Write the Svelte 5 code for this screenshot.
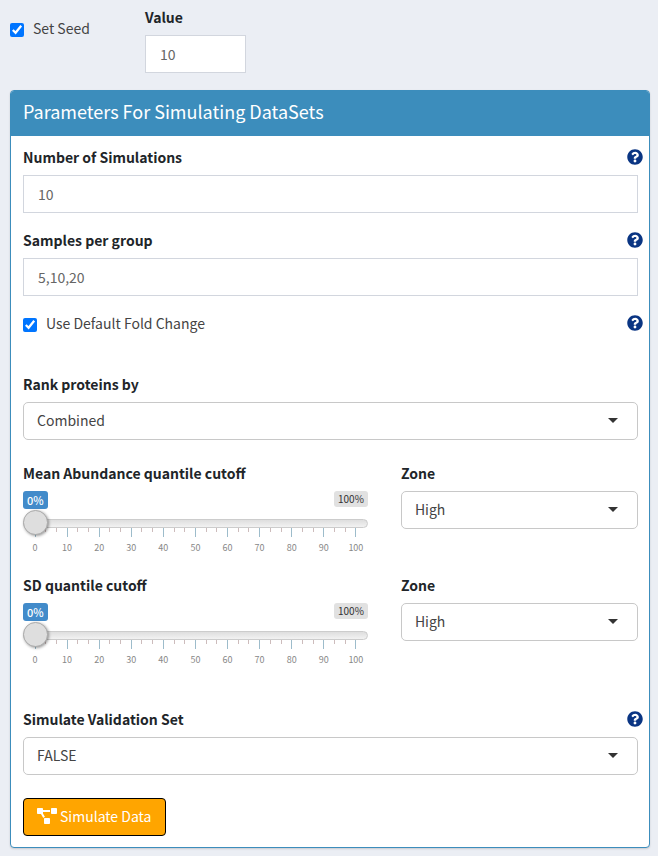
<script>
  let useSeed = $state(true);
  let seed = $state('10');
  let simulations = $state('10');
  let samples = $state('5,10,20');
  let defaultFold = $state(true);
  let rank = $state('Combined');
  let validation = $state('FALSE');
  let cutoffs = $state([
    { id: 'mean', label: 'Mean Abundance quantile cutoff', value: 0, zone: 'High' },
    { id: 'sd', label: 'SD quantile cutoff', value: 0, zone: 'High' }
  ]);

  // Eleven labelled ticks with two short ones between each pair.
  const ticks = Array.from({ length: 31 }, (_, i) => ({
    x: `${(i / 30) * 100}%`,
    major: i % 3 === 0,
    text: (i / 3) * 10
  }));
</script>

{#snippet help(topic)}
  <button type="button" class="help" aria-label={`Help: ${topic}`}>
    <svg viewBox="0 0 512 512" aria-hidden="true">
      <path d="M504 256c0 137-111 248-248 248S8 393 8 256C8 119.100 119 8 256 8s248 111.100 248 248zM262.700 90c-54.500 0-89.300 23-116.500 63.800-3.500 5.300-2.400 12.400 2.700 16.300l34.700 26.300c5.200 3.900 12.600 3 16.700-2.100 17.900-22.700 30.100-35.800 57.300-35.800 20.400 0 45.700 13.100 45.700 33 0 15-12.400 22.700-32.500 34C247.100 238.500 216 254.900 216 296v4c0 6.600 5.400 12 12 12h56c6.600 0 12-5.400 12-12v-1.300c0-28.500 83.200-29.600 83.200-106.700 0-58-60.200-102-116.500-102zM256 338c-25.400 0-46 20.600-46 46s20.600 46 46 46 46-20.600 46-46-20.600-46-46-46z" />
    </svg>
  </button>
{/snippet}

<main>
  <div class="seed">
    <label class="check seed-check">
      <input type="checkbox" bind:checked={useSeed} />
      <span>Set Seed</span>
    </label>
    <div class="seed-value">
      <div class="head"><label for="seed">Value</label></div>
      <input id="seed" class="control" type="text" bind:value={seed} />
    </div>
  </div>

  <section class="card">
    <h1>Parameters For Simulating DataSets</h1>
    <form class="body" onsubmit={(e) => e.preventDefault()}>
      <div class="field">
        <div class="head">
          <label for="sims">Number of Simulations</label>
          {@render help('Number of Simulations')}
        </div>
        <input id="sims" class="control" type="text" bind:value={simulations} />
      </div>

      <div class="field">
        <div class="head">
          <label for="samples">Samples per group</label>
          {@render help('Samples per group')}
        </div>
        <input id="samples" class="control" type="text" bind:value={samples} />
      </div>

      <div class="fold">
        <label class="check">
          <input type="checkbox" bind:checked={defaultFold} />
          <span>Use Default Fold Change</span>
        </label>
        {@render help('Use Default Fold Change')}
      </div>

      <div class="field rank">
        <div class="head"><label for="rank">Rank proteins by</label></div>
        <div class="select">
          <select id="rank" class="control" bind:value={rank}>
            <option>Combined</option>
            <option>Mean</option>
            <option>SD</option>
          </select>
        </div>
      </div>

      {#each cutoffs as c (c.id)}
        <div class="cutoff">
          <div>
            <div class="head"><label for={c.id}>{c.label}</label></div>
            <div class="badges">
              <output for={c.id}>{c.value}%</output>
              <span>100%</span>
            </div>
            <input id={c.id} type="range" min="0" max="100" bind:value={c.value} />
            <svg class="scale" aria-hidden="true">
              {#each ticks as t}
                <line class:major={t.major} x1={t.x} x2={t.x} y1="0" y2={t.major ? 9 : 4} />
                {#if t.major}<text x={t.x} y="23">{t.text}</text>{/if}
              {/each}
            </svg>
          </div>
          <div>
            <div class="head"><label for={`${c.id}-zone`}>Zone</label></div>
            <div class="select">
              <select id={`${c.id}-zone`} class="control" bind:value={c.zone}>
                <option>High</option>
                <option>Low</option>
              </select>
            </div>
          </div>
        </div>
      {/each}

      <div class="field validation">
        <div class="head">
          <label for="validation">Simulate Validation Set</label>
          {@render help('Simulate Validation Set')}
        </div>
        <div class="select">
          <select id="validation" class="control" bind:value={validation}>
            <option>FALSE</option>
            <option>TRUE</option>
          </select>
        </div>
      </div>

      <button type="submit" class="run">
        <svg viewBox="0 0 640 512" aria-hidden="true">
          <path d="M384 320H256c-17.670 0-32 14.330-32 32v128c0 17.670 14.330 32 32 32h128c17.670 0 32-14.330 32-32V352c0-17.670-14.330-32-32-32zM192 32c0-17.670-14.330-32-32-32H32C14.330 0 0 14.330 0 32v128c0 17.670 14.330 32 32 32h95.720l73.160 128.040C211.980 300.980 232.400 288 256 288h.28L192 175.510V128h224V64H192V32zM608 0H480c-17.670 0-32 14.330-32 32v128c0 17.670 14.330 32 32 32h128c17.670 0 32-14.330 32-32V32c0-17.670-14.330-32-32-32z" />
        </svg>
        <span>Simulate Data</span>
      </button>
    </form>
  </section>
</main>

<style>
  :global(body) {
    background: #ebeef4;
  }

  main {
    padding: 5px 8px 8px 10px;
    font-family: 'Source Sans Pro', 'Noto Sans CJK SC', sans-serif;
    font-size: 14px;
    font-weight: 400;
    line-height: 24px;
    color: #444;
  }

  main *,
  main *::after {
    box-sizing: border-box;
  }

  .seed {
    display: flex;
    margin-bottom: 17px;
  }

  .seed-check {
    width: 135px;
    margin-top: 11px;
    align-self: flex-start;
  }

  .seed-value {
    width: 101px;
  }

  .check {
    display: flex;
    align-items: center;
    gap: 9px;
  }

  .check input {
    width: 14px;
    height: 14px;
    margin: 3px 0 0;
  }

  .head {
    display: flex;
    align-items: center;
    justify-content: space-between;
    height: 24px;
    margin-bottom: 6px;
    font-weight: 700;
    color: #212529;
  }

  .control {
    display: block;
    width: 100%;
    height: 38px;
    margin: 0;
    padding: 0 14px;
    border: 1px solid #d2d6de;
    border-radius: 0;
    background: #fff;
    color: #666;
    font: inherit;
  }

  .card {
    border: 1px solid #3c8dbc;
    border-radius: 4px;
    background: #fff;
    box-shadow: 0 1px 2px rgba(0, 0, 0, 0.15);
    overflow: hidden;
  }

  h1 {
    margin: 0;
    padding: 0 12px 5px;
    background: #3c8dbc;
    color: #fff;
    font-size: 18px;
    font-weight: 400;
    line-height: 40px;
  }

  .body {
    padding: 9px 11px 11px 12px;
  }

  .field {
    margin-bottom: 15px;
  }

  .fold {
    display: flex;
    align-items: center;
    justify-content: space-between;
    margin-bottom: 37px;
  }

  .rank {
    margin-bottom: 21px;
  }

  .help {
    width: 16px;
    height: 16px;
    margin: 0 -5px 0 0;
    padding: 0;
    border: 0;
    background: none;
  }

  .help svg {
    display: block;
    width: 16px;
    height: 16px;
    fill: #0a3583;
  }

  .select {
    position: relative;
  }

  .select select {
    appearance: none;
    padding: 0 13px 2px;
    border-color: #c8c8c8;
    border-radius: 5px;
    color: #444;
  }

  .select::after {
    content: '';
    position: absolute;
    top: 16px;
    right: 20px;
    border: 5px solid transparent;
    border-top-color: #333;
    border-bottom: 0;
    pointer-events: none;
  }

  .cutoff {
    display: grid;
    grid-template-columns: 16fr 11fr;
    gap: 33px;
    height: 112px;
  }

  .badges {
    display: flex;
    justify-content: space-between;
    align-items: flex-start;
    height: 19px;
  }

  .badges output,
  .badges span {
    padding: 0 4px;
    border-radius: 3px;
    font-size: 11px;
    font-weight: 500;
    line-height: 18px;
    background: #428bca;
    color: #fff;
  }

  .badges span {
    font-size: 10px;
    font-weight: 400;
    line-height: 16px;
    background: #e1e1e1;
    color: #333;
  }

  input[type='range'] {
    position: relative;
    z-index: 1;
    display: block;
    appearance: none;
    width: 100%;
    height: 26px;
    margin: 0;
    background: none;
  }

  input[type='range']::-webkit-slider-runnable-track {
    height: 9px;
    border: 1px solid #ccc;
    border-radius: 5px;
    background: linear-gradient(#dedede, #f2f2f2);
  }

  input[type='range']::-webkit-slider-thumb {
    appearance: none;
    width: 25px;
    height: 25px;
    margin: -10px -1px 0;
    border: 1px solid #ababab;
    border-radius: 50%;
    background: #dedede;
    box-shadow: 1px 1px 3px rgba(0, 0, 0, 0.4);
  }

  .scale {
    display: block;
    width: calc(100% - 24px);
    height: 26px;
    margin: -8px 12px 0;
    overflow: visible;
  }

  .scale line {
    stroke: #cdbcbc;
    shape-rendering: crispEdges;
  }

  .scale line.major {
    stroke: #9dbccb;
  }

  .scale text {
    fill: #888;
    font-size: 9px;
    font-weight: 400;
    text-anchor: middle;
  }

  .validation {
    margin: 22px 0 23px;
  }

  .run {
    display: flex;
    align-items: center;
    gap: 3px;
    height: 38px;
    padding: 0 14px 2px 13px;
    border: 1px solid #000;
    border-radius: 4px;
    background: #ffa500;
    color: #fff;
    font: inherit;
  }

  .run svg {
    width: 20px;
    height: 16px;
    fill: #fff;
  }
</style>
